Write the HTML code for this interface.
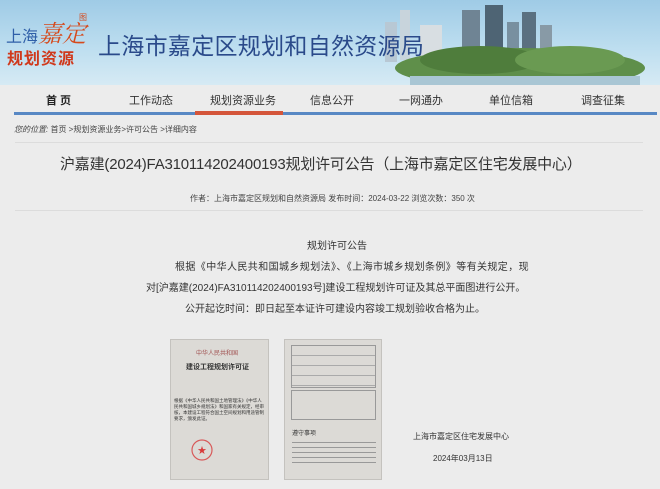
<!DOCTYPE html>
<html><head><meta charset="utf-8"><style>
*{margin:0;padding:0;box-sizing:border-box}
body{width:660px;height:489px;overflow:hidden;background:#ececec;font-family:"Liberation Sans","Noto Sans CJK SC",sans-serif;position:relative;color:#333}
.hdr{position:absolute;left:0;top:0;width:660px;height:85px;background:linear-gradient(180deg,#9fcbe6 0%,#bfdff0 60%,#d6eaf4 100%)}
.abs{position:absolute;white-space:nowrap}
.nav{position:absolute;left:4px;top:85px;width:652px;height:55px;background:#ececec}
.b{position:absolute;background:#5888c4}
</style></head><body>
<div class="hdr"></div>
<svg class="abs" style="left:370px;top:0" width="290" height="85">
<rect x="15" y="22" width="12" height="40" fill="#b8c8d4"/>
<rect x="30" y="10" width="10" height="50" fill="#c8d4dc"/>
<rect x="50" y="25" width="22" height="35" fill="#d8dee2"/>
<rect x="92" y="10" width="18" height="45" fill="#6f8494"/>
<rect x="115" y="5" width="18" height="50" fill="#4e6474"/>
<rect x="137" y="22" width="12" height="33" fill="#7890a0"/>
<rect x="152" y="12" width="14" height="45" fill="#5a7080"/>
<rect x="170" y="25" width="12" height="30" fill="#889aa6"/>
<ellipse cx="150" cy="68" rx="125" ry="20" fill="#5f8f4a"/>
<ellipse cx="110" cy="60" rx="60" ry="14" fill="#4f7d3c"/>
<ellipse cx="200" cy="60" rx="55" ry="14" fill="#6a9a52"/>
<rect x="40" y="76" width="230" height="9" fill="#a9c6d4"/>
</svg>
<div class="abs" style="left:6px;top:23px;font-size:16px;color:#2f5fa8">上海</div>
<div class="abs" style="left:38px;top:14px;font-size:24px;color:#d64a1c;font-family:'Noto Serif CJK SC',serif;font-style:italic">嘉定</div>
<div class="abs" style="left:79px;top:12px;font-size:8px;color:#d64a1c">图</div>
<div class="abs" style="left:7px;top:45px;font-size:16px;color:#d0391c;font-weight:bold;letter-spacing:1px">规划资源</div>
<div class="abs" style="left:98px;top:27px;font-size:23px;color:#2a4a8a;letter-spacing:0.3px">上海市嘉定区规划和自然资源局</div>
<div class="nav"></div>
<div class="abs" style="left:46px;top:92px;font-size:11px;font-weight:bold;color:#222">首 页</div>
<div class="abs" style="left:129px;top:92px;font-size:11px">工作动态</div>
<div class="abs" style="left:210px;top:92px;font-size:11px">规划资源业务</div>
<div class="abs" style="left:310px;top:92px;font-size:11px">信息公开</div>
<div class="abs" style="left:399px;top:92px;font-size:11px">一网通办</div>
<div class="abs" style="left:489px;top:92px;font-size:11px">单位信箱</div>
<div class="abs" style="left:581px;top:92px;font-size:11px">调查征集</div>
<div class="b" style="left:14px;top:112px;width:643px;height:3px"></div>
<div class="b" style="left:195px;top:111px;width:88px;height:4px;background:#d4553a"></div>
<div class="abs" style="left:14px;top:124px;font-size:8px;color:#444"><i>您的位置:</i> 首页 &gt;规划资源业务&gt;许可公告 &gt;详细内容</div>
<div class="b" style="left:15px;top:142px;width:628px;height:1px;background:#dcdcdc"></div>
<div class="abs" style="left:60px;top:153px;font-size:15px;letter-spacing:-0.2px;color:#333">沪嘉建(2024)FA310114202400193规划许可公告（上海市嘉定区住宅发展中心）</div>
<div class="abs" style="left:190px;top:193px;font-size:8px;color:#444">作者：上海市嘉定区规划和自然资源局 发布时间：2024-03-22 浏览次数：350 次</div>
<div class="b" style="left:15px;top:210px;width:628px;height:1px;background:#dcdcdc"></div>
<div class="abs" style="left:307px;top:237px;font-size:10px">规划许可公告</div>
<div class="abs" style="left:175px;top:258px;font-size:10px;letter-spacing:0.4px">根据《中华人民共和国城乡规划法》、《上海市城乡规划条例》等有关规定，现</div>
<div class="abs" style="left:146px;top:279px;font-size:10px">对[沪嘉建(2024)FA310114202400193号]建设工程规划许可证及其总平面图进行公开。</div>
<div class="abs" style="left:185px;top:300px;font-size:10px">公开起讫时间：即日起至本证许可建设内容竣工规划验收合格为止。</div>
<div class="abs" style="left:170px;top:339px;width:99px;height:141px;background:#dcdad6;border:1px solid #c4c2be"></div>
<div class="abs" style="left:196px;top:348px;font-size:6px;color:#a05050">中华人民共和国</div>
<div class="abs" style="left:186px;top:362px;font-size:7px;font-weight:bold;color:#333">建设工程规划许可证</div>
<div class="abs" style="left:174px;top:398px;width:92px;height:30px;font-size:4.5px;line-height:6px;white-space:normal;color:#333">根据《中华人民共和国土地管理法》《中华人民共和国城乡规划法》和国家有关规定，经审核，本建设工程符合国土空间规划和用途管制要求，颁发此证。</div>
<svg class="abs" style="left:190px;top:438px" width="24" height="24"><circle cx="12" cy="12" r="10" fill="none" stroke="#d85a5a" stroke-width="1.2"/><text x="12" y="15.5" font-size="9" fill="#d83a3a" text-anchor="middle">★</text></svg>
<div class="abs" style="left:284px;top:339px;width:98px;height:141px;background:#dcdad6;border:1px solid #c4c2be"></div>
<div class="abs" style="left:291px;top:345px;width:85px;height:43px;border:1px solid #999;background:repeating-linear-gradient(180deg,transparent 0 9px,#aaa 9px 10px)"></div>
<div class="abs" style="left:291px;top:390px;width:85px;height:30px;border:1px solid #999"></div>
<div class="abs" style="left:292px;top:428px;font-size:6px;color:#333">遵守事项</div>
<div class="abs" style="left:292px;top:442px;width:84px;height:24px;background:repeating-linear-gradient(180deg,#999 0 1px,transparent 1px 5px)"></div>
<div class="abs" style="left:413px;top:431px;font-size:8px;color:#333">上海市嘉定区住宅发展中心</div>
<div class="abs" style="left:433px;top:453px;font-size:8px;color:#333">2024年03月13日</div>
</body></html>
